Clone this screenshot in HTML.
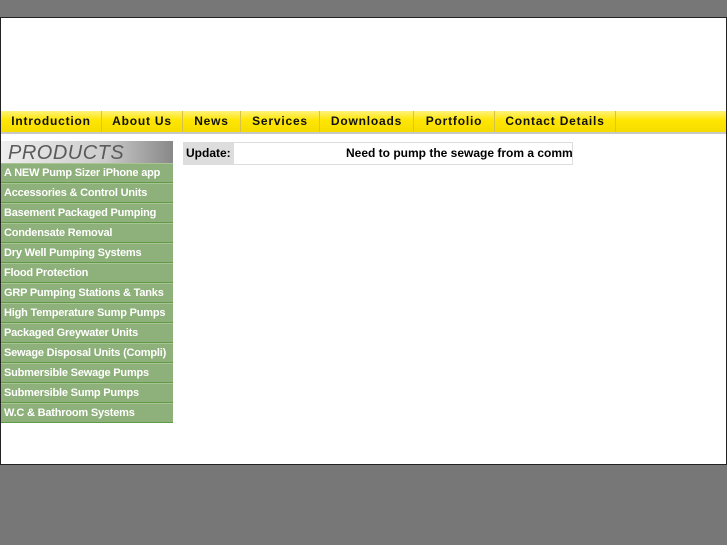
<!DOCTYPE html>
<html><head><style>
html,body{margin:0;padding:0;background:#777;width:727px;height:545px;overflow:hidden;font-family:"Liberation Sans",sans-serif}
#box{position:absolute;left:0;top:17px;width:725px;height:446px;background:#fff;border:1px solid #222}
#nav{position:absolute;left:0;top:93px;width:725px;height:21px;background:linear-gradient(#fff27a,#ffe600 45%,#f5dc00);border-bottom:2px solid #c8c8c8}
#nav span{float:left;height:21px;line-height:21px;font-size:12px;font-weight:bold;letter-spacing:.8px;color:#111;text-align:center;border-right:1px solid #d6c24a}
#prod{position:absolute;left:0;top:123px;width:172px;height:22px;background:linear-gradient(90deg,#eee,#ccc 60%,#888);font-style:italic;font-size:20px;color:#5a5a5a;line-height:24px;padding-left:7px;box-sizing:border-box;letter-spacing:.5px}
#menu{position:absolute;left:0;top:145px;width:172px}
#menu div{height:18px;line-height:18px;background:#8eb07a;border-top:1px solid #a9c596;border-bottom:1px solid #5f9a45;color:#fff;font-size:11px;letter-spacing:-.2px;font-weight:bold;padding-left:3px;white-space:nowrap;overflow:hidden}
#upd{position:absolute;left:182px;top:124px;width:388px;height:21px;border:1px solid #ddd;font-size:12px;font-weight:bold;line-height:21px;white-space:nowrap;overflow:hidden}
#upd b{display:inline-block;width:48px;background:#ddd;padding-left:2px}
</style></head><body>
<div id="box">
<div id="nav">
<span style="width:100px">Introduction</span>
<span style="width:80px">About Us</span>
<span style="width:57px">News</span>
<span style="width:78px">Services</span>
<span style="width:93px">Downloads</span>
<span style="width:80px">Portfolio</span>
<span style="width:120px">Contact Details</span>
</div>
<div id="prod">PRODUCTS</div>
<div id="menu">
<div>A NEW Pump Sizer iPhone app</div>
<div>Accessories &amp; Control Units</div>
<div>Basement Packaged Pumping</div>
<div>Condensate Removal</div>
<div>Dry Well Pumping Systems</div>
<div>Flood Protection</div>
<div>GRP Pumping Stations &amp; Tanks</div>
<div>High Temperature Sump Pumps</div>
<div>Packaged Greywater Units</div>
<div>Sewage Disposal Units (Compli)</div>
<div>Submersible Sewage Pumps</div>
<div>Submersible Sump Pumps</div>
<div>W.C &amp; Bathroom Systems</div>
</div>
<div id="upd"><b>Update:</b><span style="padding-left:112px">Need to pump the sewage from a comm</span></div>
</div>
</body></html>
